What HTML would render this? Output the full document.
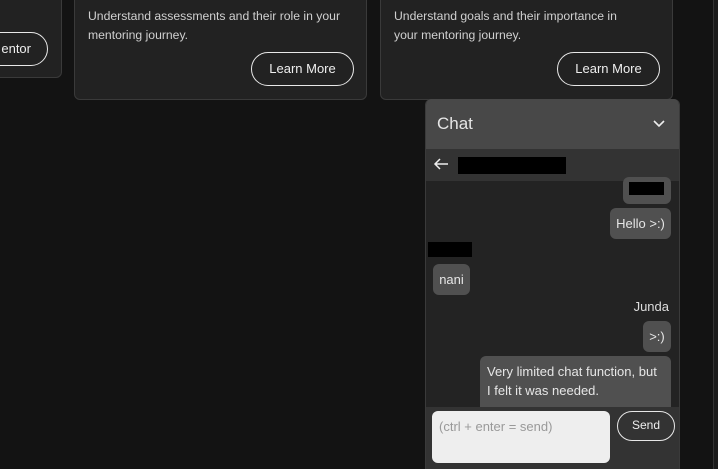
<!DOCTYPE html>
<html><head><style>
body{margin:0;width:718px;height:469px;background:#131313;position:relative;overflow:hidden;font-family:"Liberation Sans",sans-serif;color:#ddd}
.a{position:absolute;box-sizing:border-box}
.card{background:#222;border:1px solid #3a3a3a;border-radius:6px}
.txt{font-size:12.2px;line-height:19px;color:#d0d0d0;white-space:nowrap}
.btn{border:1.5px solid #e8e8e8;border-radius:17px;color:#eee;font-size:13px;text-align:center;line-height:31px}
.bub{background:#505050;border-radius:6px;font-size:13px;color:#e6e6e6}
</style></head><body>
<div class="a card" style="left:-10px;top:-10px;width:72px;height:88px"></div>
<div class="a btn" style="left:-40px;top:32px;width:88px;height:34px;line-height:31px;text-align:right;padding-right:16px">entor</div>
<div class="a card" style="left:74px;top:-10px;width:293px;height:110px"></div>
<div class="a txt" style="left:88px;top:7px">Understand assessments and their role in your<br>mentoring journey.</div>
<div class="a btn" style="left:251px;top:52px;width:103px;height:34px">Learn More</div>
<div class="a card" style="left:380px;top:-10px;width:293px;height:110px"></div>
<div class="a txt" style="left:394px;top:7px">Understand goals and their importance in<br>your mentoring journey.</div>
<div class="a btn" style="left:557px;top:52px;width:103px;height:34px">Learn More</div>
<div class="a" style="left:713px;top:0;width:1px;height:469px;background:#333"></div>
<div class="a" style="left:714px;top:0;width:4px;height:469px;background:#1b1b1b"></div>

<div class="a" style="left:425px;top:99px;width:255px;height:370px;background:#232323;border-radius:6px 6px 0 0;overflow:hidden;border-left:1px solid #3a3a3a;border-right:1px solid #3a3a3a">
 <div class="a" style="left:0;top:0;width:255px;height:50px;background:#484848"></div>
 <div class="a" style="left:11px;top:15px;font-size:17px;color:#e6e6e6">Chat</div>
 <svg class="a" style="left:226px;top:19px" width="14" height="12" viewBox="0 0 14 12"><path d="M2 3l5 5 5-5" stroke="#eee" stroke-width="1.6" fill="none"/></svg>
 <div class="a" style="left:0;top:50px;width:255px;height:32px;background:#333"></div>
 <svg class="a" style="left:7px;top:58px" width="16" height="14" viewBox="0 0 16 14"><path d="M15 7H2M7 2L2 7l5 5" stroke="#eee" stroke-width="1.5" fill="none"/></svg>
 <div class="a" style="left:32px;top:58px;width:108px;height:17px;background:#000"></div>
 <div class="a bub" style="left:197px;top:78px;width:48px;height:27px"></div>
 <div class="a" style="left:203px;top:83px;width:35px;height:13px;background:#000"></div>
 <div class="a bub" style="left:184px;top:109px;width:61px;height:31px;line-height:31px;text-align:center">Hello &gt;:)</div>
 <div class="a" style="left:2px;top:143px;width:44px;height:15px;background:#000"></div>
 <div class="a bub" style="left:7px;top:165px;width:37px;height:31px;line-height:31px;text-align:center">nani</div>
 <div class="a" style="right:10px;top:200px;font-size:13px;color:#ddd">Junda</div>
 <div class="a bub" style="left:217px;top:222px;width:28px;height:31px;line-height:31px;text-align:center">&gt;:)</div>
 <div class="a bub" style="left:54px;top:257px;width:191px;height:60px;padding:6px 7px;line-height:19px">Very limited chat function, but I felt it was needed.</div>
 <div class="a" style="left:0;top:308px;width:255px;height:62px;background:#333"></div>
 <div class="a" style="left:6px;top:312px;width:178px;height:52px;background:#eee;border-radius:6px;font-size:13px;color:#999;padding:8px 7px">(ctrl + enter = send)</div>
 <div class="a btn" style="left:191px;top:312px;width:58px;height:30px;line-height:27px;font-size:12px;border-radius:15px">Send</div>
</div>
</body></html>
